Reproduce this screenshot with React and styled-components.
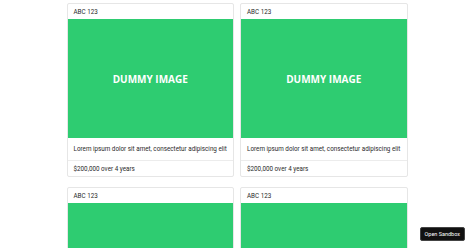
import styled, { createGlobalStyle } from "styled-components";

const GlobalStyle = createGlobalStyle`
  body {
    margin: 0;
    background: #fff;
    font-family: Roboto, "Liberation Sans", sans-serif;
    color: #222;
  }
`;

const Page = styled.div`
  width: 474px;
  height: 248px;
  overflow: hidden;
  position: relative;
`;

const Grid = styled.div`
  width: 341px;
  margin: 0 auto;
  padding-top: 3px;
  display: grid;
  grid-template-columns: 1fr 1fr;
  column-gap: 6px;
  row-gap: 10px;
`;

const Card = styled.div`
  border: 1px solid #e6e6e6;
  border-radius: 2px;
  background: #fff;
  overflow: hidden;
`;

const Row = styled.div`
  height: ${(p) => p.$h || 15}px;
  padding: 0 6px;
  display: flex;
  align-items: center;
  font-size: 6.3px;
  white-space: nowrap;
  color: #2a2a2a;
  ${(p) => p.$divider && "border-bottom: 1px solid #ececec;"}
`;

const Image = styled.div`
  height: 119px;
  background: #2ecc71;
  display: flex;
  align-items: center;
  justify-content: center;
  color: #fff;
  font-family: "Open Sans", sans-serif;
  font-weight: 700;
  font-size: 10px;
`;

const SandboxButton = styled.button`
  position: absolute;
  right: 9px;
  bottom: 7px;
  height: 14px;
  padding: 0 4px;
  border: 1px solid #444;
  border-radius: 2px;
  background: #111;
  color: #fff;
  font-family: Roboto, sans-serif;
  font-size: 5.5px;
  cursor: pointer;
`;

const items = [1, 2, 3, 4];

export default function App() {
  return (
    <Page>
      <GlobalStyle />
      <Grid>
        {items.map((id) => (
          <Card key={id}>
            <Row $h={15}>ABC 123</Row>
            <Image>DUMMY IMAGE</Image>
            <Row $h={22} $divider>
              Lorem ipsum dolor sit amet, consectetur adipiscing elit
            </Row>
            <Row $h={15}>$200,000 over 4 years</Row>
          </Card>
        ))}
      </Grid>
      <SandboxButton>Open Sandbox</SandboxButton>
    </Page>
  );
}
